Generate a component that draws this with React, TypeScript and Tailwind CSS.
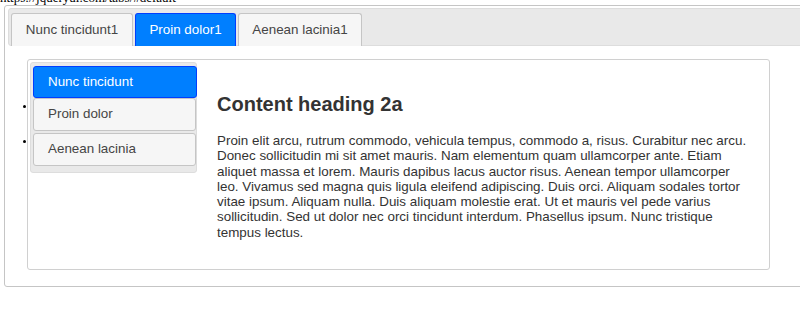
const topTabs = [
  { label: 'Nunc tincidunt1', w: 'w-[122px]', active: false },
  { label: 'Proin dolor1', w: 'w-[101px]', active: true },
  { label: 'Aenean lacinia1', w: 'w-[124px]', active: false },
];

export default function App() {
  return (
    <div className="w-[800px] h-[314px] overflow-hidden bg-white font-['Liberation_Sans',Arial,sans-serif]">
      {/* page url, mostly scrolled off the top */}
      <div className="-mt-[10px] h-[15px] whitespace-nowrap font-['Liberation_Serif','Times_New_Roman',serif] text-[13px] leading-[15px] text-black">
        https://jqueryui.com/tabs/#default
      </div>

      {/* outer tabs widget */}
      <div className="ml-[4px] w-[820px] h-[282px] border border-[#c5c5c5] rounded-[3px] pt-[2px] pl-[3px]">
        {/* tab bar */}
        <div className="flex items-start gap-[2px] h-[38px] pt-[4px] pl-[2px] bg-[#e9e9e9] border border-[#dddddd] rounded-[3px]">
          {topTabs.map((t) => (
            <div
              key={t.label}
              className={`${t.w} h-[33px] -mb-px flex items-center justify-center rounded-t-[3px] border border-b-0 text-[13.4px] ${
                t.active
                  ? 'bg-[#007fff] border-[#003eff] text-white'
                  : 'bg-[#f6f6f6] border-[#c5c5c5] text-[#454545]'
              }`}
            >
              {t.label}
            </div>
          ))}
        </div>

        {/* panel with vertical tabs */}
        <div className="mt-[13px] ml-[19px] w-[743px] h-[211px] border border-[#d0d0d0] rounded-[3px] flex items-start pt-[2px] pl-[2px]">
          <div className="w-[167px] h-[111px] bg-[#e9e9e9] border border-[#dddddd] rounded-[3px] pt-[3px] pl-[2px]">
            <div className="w-[164px] h-[32px] flex items-center pl-[14px] rounded-[3px] border border-[#003eff] bg-[#007fff] text-white text-[13.4px]">
              Nunc tincidunt
            </div>
            <div className="relative w-[163px] h-[33px] flex items-center pl-[14px] rounded-[3px] border border-[#c5c5c5] bg-[#f6f6f6] text-[#454545] text-[13.4px]">
              <span className="absolute -left-[11px] top-[6px] w-[3px] h-[3px] rounded-full bg-black" />
              Proin dolor
            </div>
            <div className="relative mt-[2px] w-[163px] h-[33px] flex items-center pl-[14px] rounded-[3px] border border-[#c5c5c5] bg-[#f6f6f6] text-[#454545] text-[13.4px]">
              <span className="absolute -left-[11px] top-[6px] w-[3px] h-[3px] rounded-full bg-black" />
              Aenean lacinia
            </div>
          </div>

          <div className="ml-[20px] mt-[31px] w-[536px] text-[#333333]">
            <h2 className="text-[20px] leading-[22px] font-bold">Content heading 2a</h2>
            <p className="mt-[18px] text-[13.4px] leading-[15.3px]">
              Proin elit arcu, rutrum commodo, vehicula tempus, commodo a, risus. Curabitur nec arcu. Donec
              sollicitudin mi sit amet mauris. Nam elementum quam ullamcorper ante. Etiam aliquet massa et
              lorem. Mauris dapibus lacus auctor risus. Aenean tempor ullamcorper leo. Vivamus sed magna quis
              ligula eleifend adipiscing. Duis orci. Aliquam sodales tortor vitae ipsum. Aliquam nulla. Duis
              aliquam molestie erat. Ut et mauris vel pede varius sollicitudin. Sed ut dolor nec orci tincidunt
              interdum. Phasellus ipsum. Nunc tristique tempus lectus.
            </p>
          </div>
        </div>
      </div>
    </div>
  );
}
